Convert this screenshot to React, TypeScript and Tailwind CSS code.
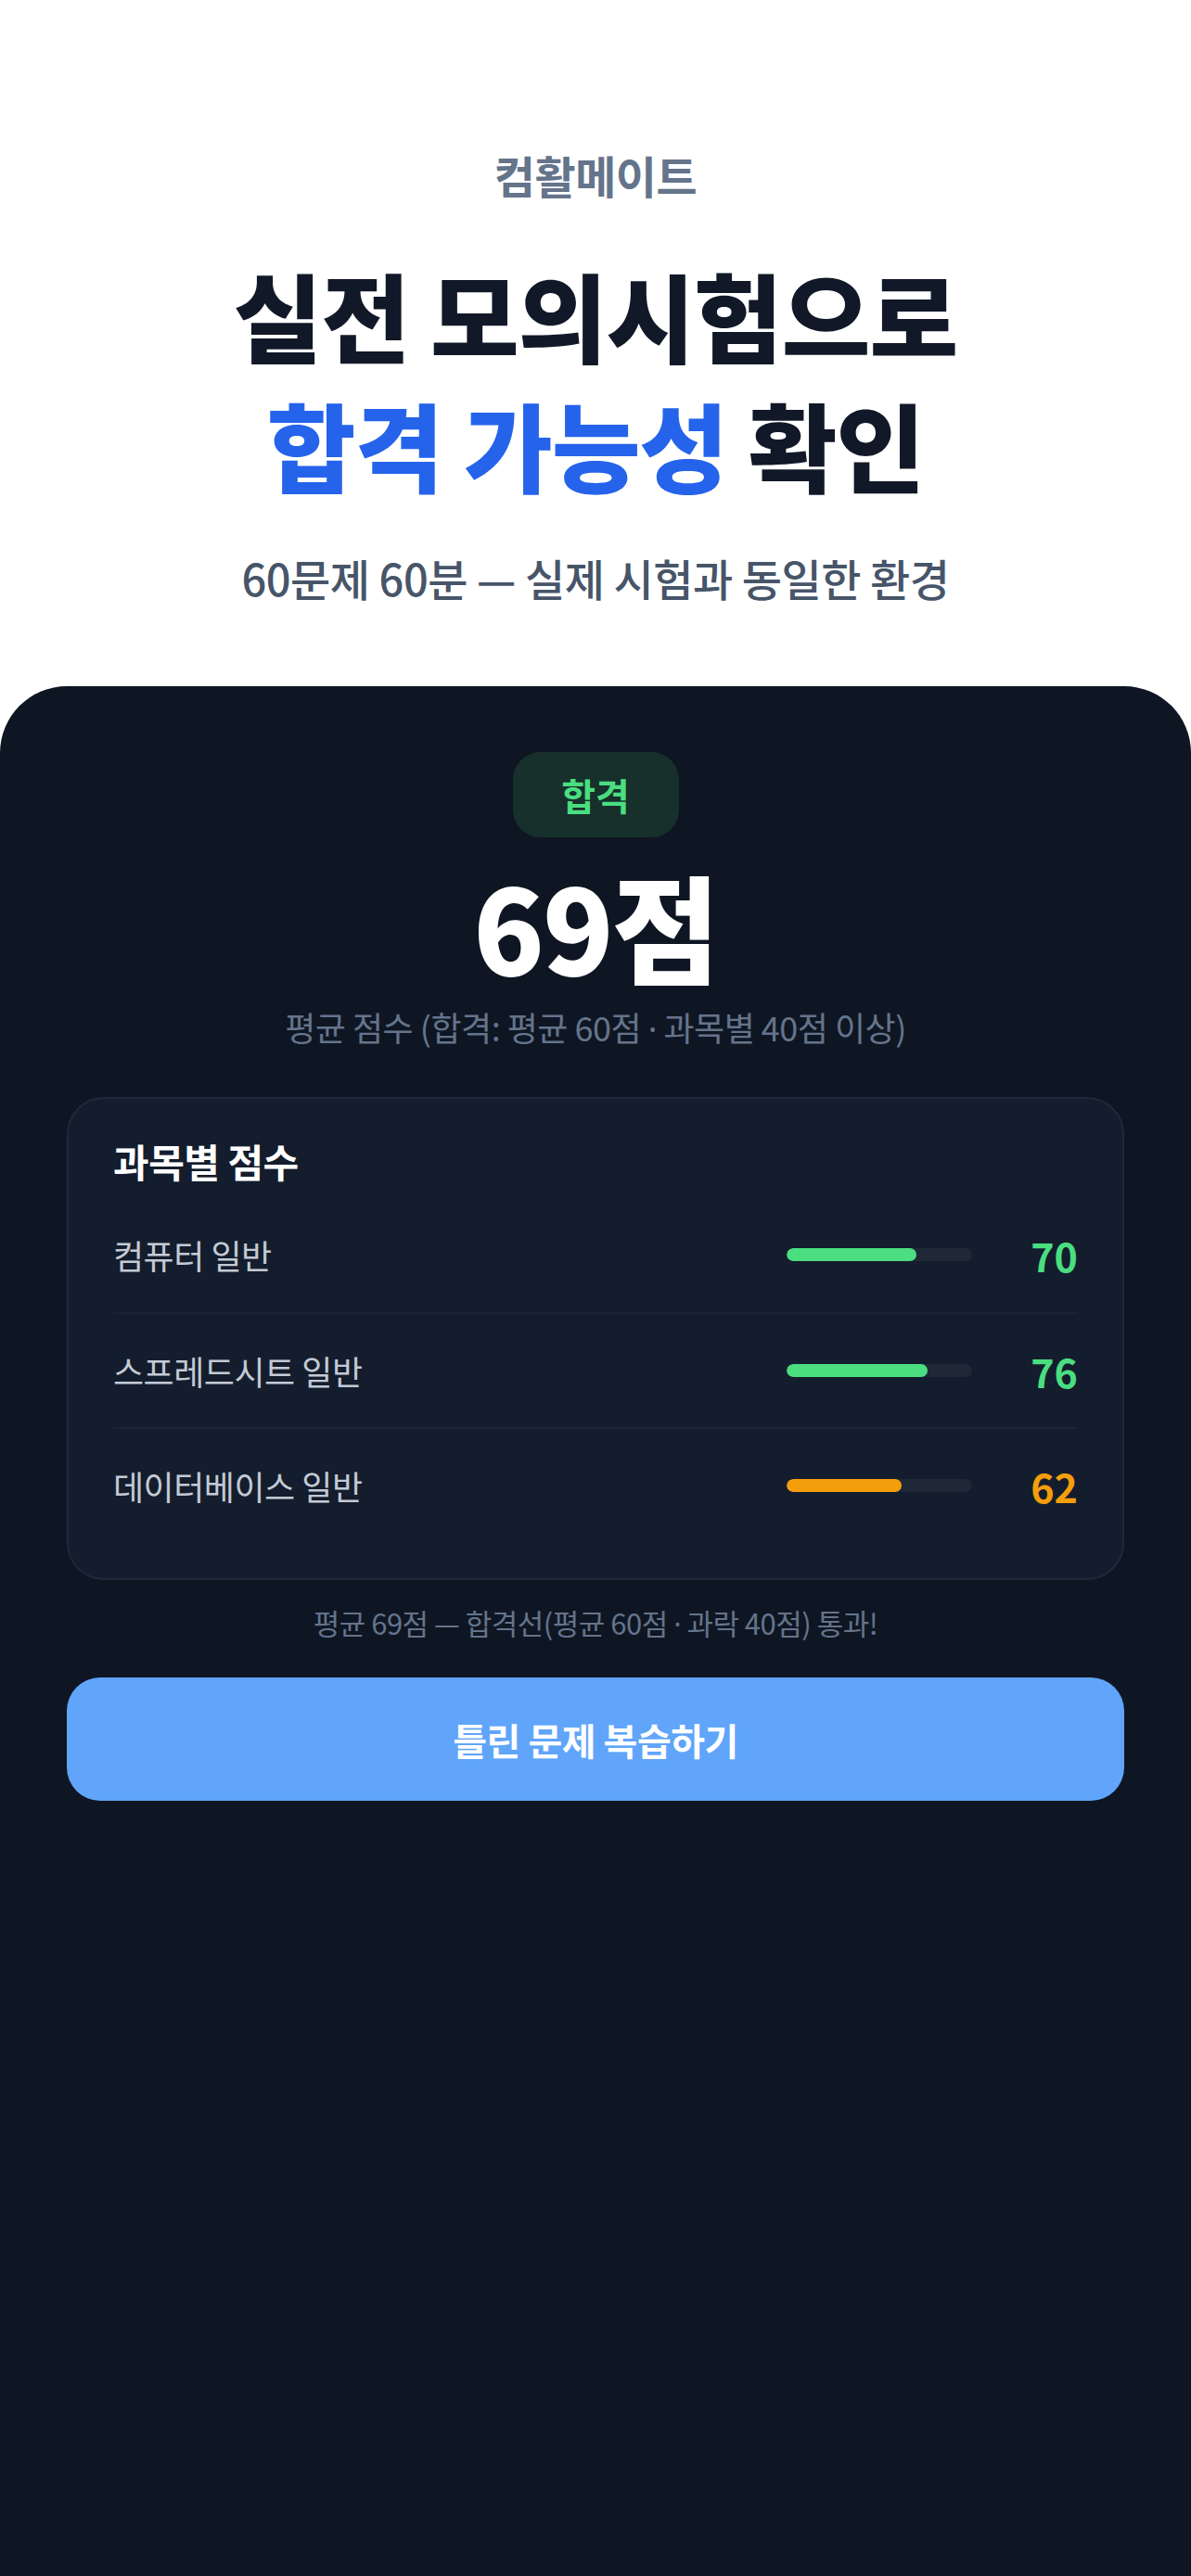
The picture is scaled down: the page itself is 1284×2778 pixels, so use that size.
import React from "react";

const subjects = [
  { name: "컴퓨터 일반", score: 70, color: "bg-[#4ade80]", text: "text-[#4ade80]" },
  { name: "스프레드시트 일반", score: 76, color: "bg-[#4ade80]", text: "text-[#4ade80]" },
  { name: "데이터베이스 일반", score: 62, color: "bg-[#f59e0b]", text: "text-[#f59e0b]" },
];

const Dot = () => <span style={{ fontFamily: '"Noto Sans", sans-serif' }}>·</span>;

export default function App() {
  return (
    <div
      className="min-h-screen flex flex-col bg-white"
      style={{ fontFamily: '"Noto Sans CJK KR", "Noto Sans", sans-serif' }}
    >
      <header className="flex flex-col items-center pt-[158px] pb-[85px]">
        <div className="text-[48px] leading-[60px] font-bold text-[#64748b] tracking-[-0.5px]">컴활메이트</div>
        <h1 className="mt-[51px] text-[104px] leading-[140px] font-extrabold text-[#111827] text-center tracking-[-1px]">
          <div>실전 모의시험으로</div>
          <div>
            <span className="text-[#2563eb]">합격 가능성</span> 확인
          </div>
        </h1>
        <p className="mt-[42px] text-[47px] leading-[64px] font-medium text-[#475569] tracking-[-0.5px]">
          60문제 60분 — 실제 시험과 동일한 환경
        </p>
      </header>

      <main className="flex-1 bg-[#0f1623] rounded-t-[72px] flex flex-col items-center pt-[71px] px-[72px]">
        <div className="h-[92px] w-[179px] rounded-[30px] bg-[#17302b] flex items-center justify-center text-[40px] font-bold text-[#4ade80]">
          합격
        </div>
        <div className="mt-[24px] text-[126px] leading-[140px] font-extrabold text-white tracking-[-2px]">69점</div>
        <div className="mt-[16px] text-[36px] leading-[48px] text-[#64748b] tracking-[-0.5px]">
          평균 점수 (합격: 평균 60점 <Dot /> 과목별 40점 이상)
        </div>

        <section className="mt-[49px] w-full rounded-[40px] border-2 border-[#1e293b] bg-[#141d2d] px-[48px] pt-[41px] pb-[39px]">
          <h2 className="text-[42px] leading-[52px] font-bold text-white tracking-[-0.5px]">과목별 점수</h2>
          <div className="mt-[13px] flex flex-col">
            {subjects.map((s, i) => (
              <div
                key={s.name}
                className={`h-[124px] flex items-center ${i > 0 ? "border-t-2 border-[#1b2433]" : ""}`}
              >
                <div className="flex-1 text-[36px] text-[#c3cad5] tracking-[-0.5px]">{s.name}</div>
                <div className="w-[200px] h-[14px] rounded-full bg-[#1e2837] overflow-hidden">
                  <div className={`h-full rounded-full ${s.color}`} style={{ width: `${s.score}%` }} />
                </div>
                <div className={`w-[114px] text-right text-[43px] font-bold ${s.text}`}>{s.score}</div>
              </div>
            ))}
          </div>
        </section>

        <p className="mt-[24px] text-[31px] leading-[44px] text-[#64748b] tracking-[-0.5px]">
          평균 69점 — 합격선(평균 60점 <Dot /> 과락 40점) 통과!
        </p>

        <button className="mt-[36px] w-full h-[133px] rounded-[36px] bg-[#60a5fa] text-white text-[40px] font-bold tracking-[-0.5px]">
          틀린 문제 복습하기
        </button>
      </main>
    </div>
  );
}
